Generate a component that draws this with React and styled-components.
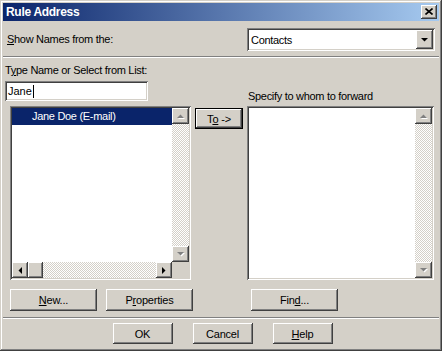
import React from "react";
import styled, { createGlobalStyle, css } from "styled-components";

const GlobalStyle = createGlobalStyle`
  html, body {
    margin: 0;
    padding: 0;
    background: #d4d0c8;
  }
  body {
    font-family: "Liberation Sans", Arial, sans-serif;
    font-size: 11px;
    color: #000;
  }
`;

const raised = css`
  box-shadow: inset -1px -1px #404040, inset 1px 1px #ffffff,
    inset -2px -2px #808080, inset 2px 2px #d4d0c8;
`;

const sunken = css`
  box-shadow: inset 1px 1px #808080, inset -1px -1px #ffffff,
    inset 2px 2px #404040, inset -2px -2px #d4d0c8;
`;

const checkered = css`
  background: repeating-conic-gradient(#d4d0c8 0% 25%, #ffffff 0% 50%) 0 0 / 2px 2px;
`;

function Arrow({ dir = "up", disabled }) {
    const points = {
        up: "0,4 7,4 3.5,0.5",
        down: "0,0 7,0 3.5,3.5",
        left: "4,0 4,7 0.5,3.5",
        right: "0,0 0,7 3.5,3.5",
    }[dir];
    const vertical = dir === "up" || dir === "down";
    return (
        <ArrowSvg
            width={vertical ? 7 : 4}
            height={vertical ? 4 : 7}
            viewBox={vertical ? "0 0 7 4" : "0 0 4 7"}
            $disabled={disabled}
        >
            <polygon points={points} />
        </ArrowSvg>
    );
}

function App() {
    return (
        <>
            <GlobalStyle />
            <Window>
                <TitleBar>
                    <TitleText>Rule Address</TitleText>
                    <CloseButton>
                        <svg width="8" height="7" viewBox="0 0 8 7">
                            <path d="M0.5 0.5 L7.5 6.5 M7.5 0.5 L0.5 6.5" stroke="#000" strokeWidth="1.6" />
                        </svg>
                    </CloseButton>
                </TitleBar>

                <Body>
                    <TopRow>
                        <Label><U>S</U>how Names from the:</Label>
                        <Combo>
                            <ComboText>Contacts</ComboText>
                            <ComboButton><Arrow dir="down" /></ComboButton>
                        </Combo>
                    </TopRow>

                    <Separator />

                    <MainGrid>
                        <LeftHead>
                            <Label>T<U>y</U>pe Name or Select from List:</Label>
                            <NameInput>
                                Jane<Caret />
                            </NameInput>
                        </LeftHead>
                        <RightLabel>Specify to whom to forward</RightLabel>

                        <LeftList>
                            <ListContent>
                                <SelectedRow>Jane Doe (E-mail)</SelectedRow>
                            </ListContent>
                            <VScroll>
                                <ScrollButton><Arrow dir="up" disabled /></ScrollButton>
                                <Track />
                                <ScrollButton><Arrow dir="down" disabled /></ScrollButton>
                            </VScroll>
                            <HScroll>
                                <ScrollButton $w={16}><Arrow dir="left" /></ScrollButton>
                                <Thumb />
                                <Track />
                                <ScrollButton $w={16}><Arrow dir="right" /></ScrollButton>
                            </HScroll>
                            <Corner />
                        </LeftList>

                        <ToButton><span>T<U>o</U> -&gt;</span></ToButton>

                        <RightList>
                            <ListContent />
                            <VScroll>
                                <ScrollButton><Arrow dir="up" disabled /></ScrollButton>
                                <Track />
                                <ScrollButton><Arrow dir="down" disabled /></ScrollButton>
                            </VScroll>
                        </RightList>

                        <LeftButtons>
                            <Button $w={87}><U>N</U>ew...</Button>
                            <Button $w={87}>P<U>r</U>operties</Button>
                        </LeftButtons>
                        <FindButton $w={87}>Fin<U>d</U>...</FindButton>
                    </MainGrid>

                    <Separator $top={6} />

                    <BottomRow>
                        <Button $w={60} $h={21}>OK</Button>
                        <Button $w={60} $h={21}>Cancel</Button>
                        <Button $w={60} $h={21}><U>H</U>elp</Button>
                    </BottomRow>
                </Body>
            </Window>
        </>
    );
}

const Window = styled.div`
    width: 442px;
    height: 351px;
    box-sizing: border-box;
    padding: 3px;
    background: #d4d0c8;
    box-shadow: inset -1px -1px #404040, inset 1px 1px #d4d0c8,
        inset -2px -2px #808080, inset 2px 2px #ffffff;
    display: flex;
    flex-direction: column;
`;

const TitleBar = styled.div`
    height: 18px;
    display: flex;
    align-items: center;
    justify-content: space-between;
    padding: 0 2px 0 2px;
    background: linear-gradient(90deg, #0a246a 0%, #a6caf0 100%);
`;

const TitleText = styled.div`
    color: #fff;
    font-weight: bold;
    font-size: 12px;
    letter-spacing: -0.3px;
    padding-left: 1px;
`;

const CloseButton = styled.div`
    width: 16px;
    height: 14px;
    background: #d4d0c8;
    ${raised};
    display: flex;
    align-items: center;
    justify-content: center;
    padding-bottom: 1px;
    box-sizing: border-box;
`;

const Body = styled.div`
    display: flex;
    flex-direction: column;
    flex: 1;
`;

const U = styled.span`
    text-decoration: underline;
`;

const Label = styled.div`
    line-height: 13px;
    letter-spacing: -0.3px;
    white-space: nowrap;
`;

const TopRow = styled.div`
    display: flex;
    align-items: center;
    justify-content: space-between;
    margin-top: 7px;
    padding: 0 4px 0 4px;
`;

const Combo = styled.div`
    width: 188px;
    height: 23px;
    box-sizing: border-box;
    padding: 2px;
    background: #fff;
    ${sunken};
    display: flex;
    align-items: center;
`;

const ComboText = styled.div`
    flex: 1;
    padding-left: 2px;
    letter-spacing: -0.3px;
`;

const ComboButton = styled.div`
    width: 17px;
    height: 100%;
    background: #d4d0c8;
    ${raised};
    display: flex;
    align-items: center;
    justify-content: center;
`;

const ArrowSvg = styled.svg`
    display: block;
    fill: ${(p) => (p.$disabled ? "#808080" : "#000")};
    filter: ${(p) => (p.$disabled ? "drop-shadow(1px 1px 0 #ffffff)" : "none")};
`;

const Separator = styled.div`
    height: 0;
    border-top: 1px solid #808080;
    border-bottom: 1px solid #ffffff;
    margin-top: ${(p) => p.$top ?? 5}px;
`;

const MainGrid = styled.div`
    display: grid;
    grid-template-columns: 186px 48px 187px;
    grid-template-rows: auto 174px auto;
    column-gap: 4px;
    row-gap: 5px;
    padding-left: 2px;
    margin-top: 6px;
`;

const LeftHead = styled.div`
    grid-column: 1;
    grid-row: 1;
    display: flex;
    flex-direction: column;
`;

const NameInput = styled.div`
    margin-top: 4px;
    width: 143px;
    height: 20px;
    box-sizing: border-box;
    padding-left: 3px;
    background: #fff;
    ${sunken};
    display: flex;
    align-items: center;
`;

const Caret = styled.span`
    width: 1px;
    height: 13px;
    background: #000;
    margin-left: 1px;
`;

const RightLabel = styled(Label)`
    grid-column: 3;
    grid-row: 1;
    align-self: end;
    padding-left: 1px;
    margin-bottom: -2px;
`;

const ListBox = styled.div`
    box-sizing: border-box;
    padding: 2px;
    background: #fff;
    ${sunken};
    display: grid;
    grid-template-columns: 1fr 17px;
`;

const LeftList = styled(ListBox)`
    grid-column: 1;
    grid-row: 2;
    margin-left: 5px;
    grid-template-rows: 1fr 16px;
`;

const RightList = styled(ListBox)`
    grid-column: 3;
    grid-row: 2;
    grid-template-rows: 1fr;
`;

const ListContent = styled.div`
    overflow: hidden;
`;

const SelectedRow = styled.div`
    height: 17px;
    line-height: 17px;
    padding-left: 20px;
    background: #0a246a;
    color: #fff;
    letter-spacing: -0.3px;
`;

const VScroll = styled.div`
    display: flex;
    flex-direction: column;
`;

const HScroll = styled.div`
    display: flex;
`;

const Track = styled.div`
    flex: 1;
    ${checkered};
`;

const ScrollButton = styled.div`
    width: ${(p) => (p.$w ? `${p.$w}px` : "100%")};
    height: 16px;
    flex-shrink: 0;
    background: #d4d0c8;
    ${raised};
    display: flex;
    align-items: center;
    justify-content: center;
`;

const Thumb = styled.div`
    width: 15px;
    height: 16px;
    background: #d4d0c8;
    ${raised};
`;

const Corner = styled.div`
    background: #d4d0c8;
`;

const Button = styled.div`
    width: ${(p) => p.$w}px;
    height: ${(p) => p.$h ?? 22}px;
    box-sizing: border-box;
    background: #d4d0c8;
    ${raised};
    display: flex;
    align-items: center;
    justify-content: center;
    letter-spacing: -0.2px;
    white-space: nowrap;
`;

const ToButton = styled.div`
    grid-column: 2;
    grid-row: 2;
    align-self: start;
    margin-top: 2px;
    height: 21px;
    box-sizing: border-box;
    border: 1px solid #000;
    background: #d4d0c8;
    ${raised};
    display: flex;
    align-items: center;
    justify-content: center;
    letter-spacing: -0.2px;
`;

const LeftButtons = styled.div`
    grid-column: 1 / 3;
    grid-row: 3;
    display: flex;
    gap: 9px;
    padding-left: 5px;
    margin-top: 4px;
`;

const FindButton = styled(Button)`
    grid-column: 3;
    grid-row: 3;
    margin-left: 4px;
    margin-top: 4px;
`;

const BottomRow = styled.div`
    display: flex;
    justify-content: center;
    gap: 20px;
    margin-top: 4px;
    padding-left: 3px;
`;

export default App;
